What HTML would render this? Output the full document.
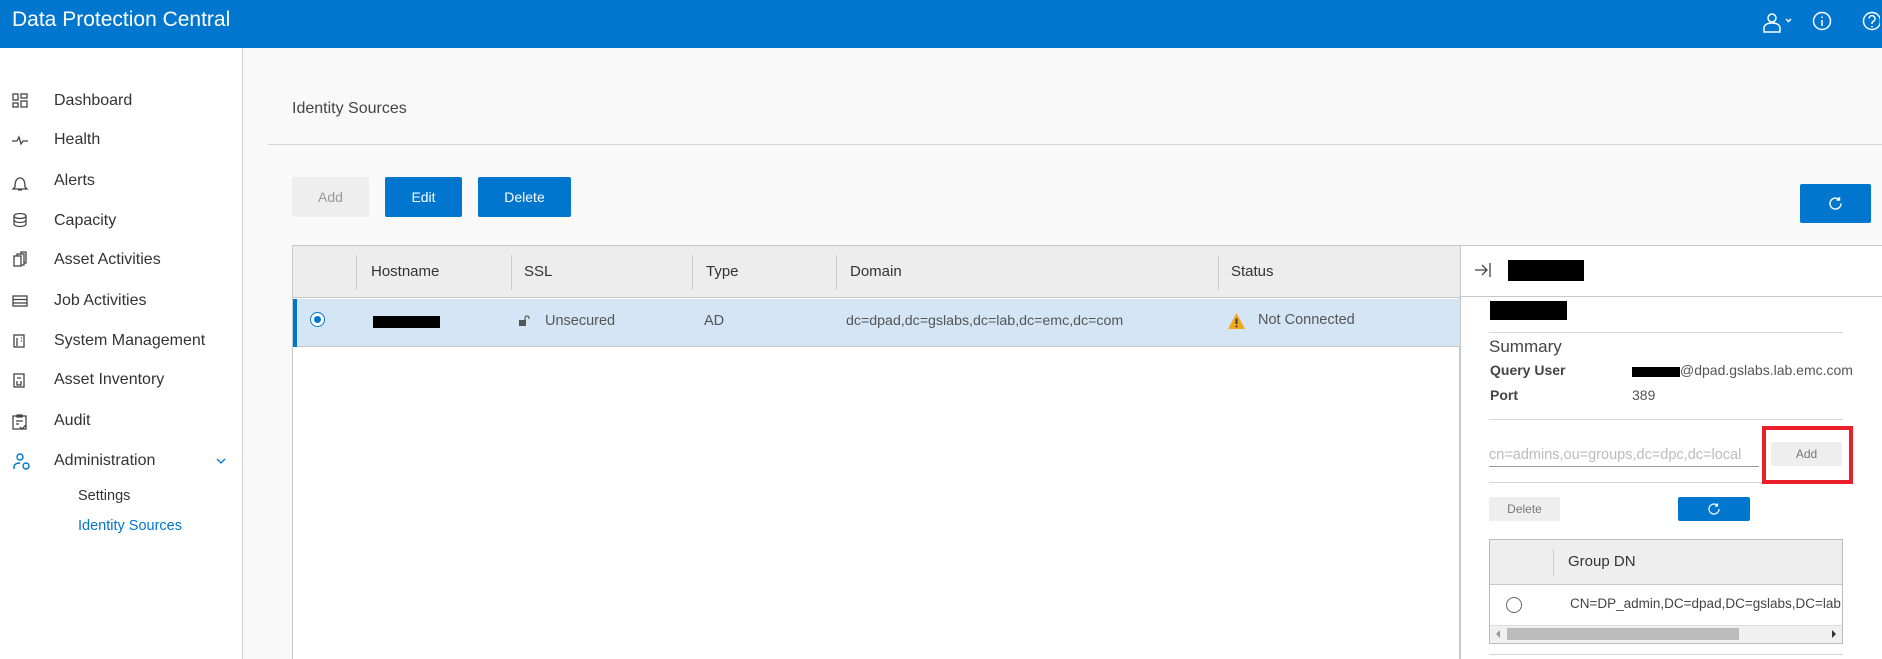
<!DOCTYPE html>
<html><head><meta charset="utf-8"><style>
*{box-sizing:border-box;margin:0;padding:0}
body{width:1882px;height:659px;overflow:hidden;font-family:"Liberation Sans",sans-serif;background:#fff;position:relative;color:#333}
.a{position:absolute}
.hdr{left:0;top:0;width:1882px;height:48px;background:#0076ce}
.side{left:0;top:48px;width:243px;height:611px;background:#fff;border-right:1px solid #d0d0d0}
.main{left:243px;top:48px;width:1639px;height:611px;background:#f9f9f9}
.nav{font-size:16px;color:#333;left:54px}
.btn{font-size:14px;text-align:center;border-radius:2px}
.th{font-size:15px;color:#333;top:263px}
.sep{width:1px;background:#ccc}
</style></head><body>
<div class="a hdr"></div>
<div class="a" style="left:12px;top:8px;font-size:21px;color:#fff">Data Protection Central</div>
<svg class="a" style="left:1760px;top:11px" width="120" height="28" viewBox="0 0 120 28" fill="none" stroke="#fff" stroke-width="1.5">
<circle cx="12" cy="7" r="4"/><path d="M4 21v-4c0-3 3-5 8-5s8 2 8 5v4z"/>
<path d="M26 8l2.5 2.5 2.5-2.5"/>
<circle cx="62" cy="10" r="8.5"/><path d="M62 9v6M62 5.5v1.5"/>
<circle cx="112" cy="10" r="8.5"/><path d="M109 7.5a3 3 0 1 1 4 3c-1 .5-1 1.2-1 2.5M112 15v1.5"/>
</svg>
<div class="a side"></div>
<svg class="a" style="left:10px;top:90px" width="22" height="390" viewBox="0 0 22 390" fill="none" stroke="#444" stroke-width="1.3">
<rect x="3" y="4" width="5" height="6"/><rect x="11" y="4" width="6" height="4"/><rect x="3" y="13" width="5" height="4"/><rect x="11" y="11" width="6" height="6"/>
<path d="M2 51h5l2-4 2 7 2-3h5"/>
<path d="M5 97c0-7 2-9 5-9s5 2 5 9l2 2H3zM8 100h4"/>
<ellipse cx="10" cy="126" rx="6" ry="2.5"/><path d="M4 126v8c0 1.5 3 2.5 6 2.5s6-1 6-2.5v-8M4 130c0 1.5 3 2.5 6 2.5s6-1 6-2.5"/>
<rect x="4" y="166" width="7" height="10"/><path d="M7 166v-2h7v11h-3M11 164v-2h5v11h-2"/>
<rect x="3" y="206" width="14" height="10"/><path d="M3 209.5h14M3 213h14"/>
<rect x="4" y="245" width="10" height="12"/><path d="M7 248v8M11 248h1M11 251h1"/>
<rect x="4" y="284" width="10" height="13"/><path d="M7 288h4M7 291v4h4v-4"/>
<rect x="3" y="326" width="13" height="13"/><path d="M7 325h5v2H7zM6 331h7M6 334h3M10 337l2 2 4-4"/>
</svg>
<div class="a nav" style="top:92px">Dashboard</div>
<div class="a nav" style="top:131px">Health</div>
<div class="a nav" style="top:172px">Alerts</div>
<div class="a nav" style="top:212px">Capacity</div>
<div class="a nav" style="top:251px">Asset Activities</div>
<div class="a nav" style="top:292px">Job Activities</div>
<div class="a nav" style="top:332px">System Management</div>
<div class="a nav" style="top:371px">Asset Inventory</div>
<div class="a nav" style="top:412px">Audit</div>
<svg class="a" style="left:12px;top:452px" width="20" height="20" viewBox="0 0 20 20" fill="none" stroke="#0076ce" stroke-width="1.4"><circle cx="8" cy="5" r="3"/><path d="M2 17v-2c0-3 3-4 6-4"/><circle cx="14" cy="14" r="3"/></svg>
<div class="a nav" style="top:452px">Administration</div>
<svg class="a" style="left:215px;top:456px" width="12" height="10" viewBox="0 0 12 10" fill="none" stroke="#0076ce" stroke-width="1.3"><path d="M2 3l4 4 4-4"/></svg>
<div class="a" style="left:78px;top:488px;font-size:14.5px;color:#333">Settings</div>
<div class="a" style="left:78px;top:518px;font-size:14.5px;color:#0076ce">Identity Sources</div>

<div class="a main"></div>
<div class="a" style="left:292px;top:100px;font-size:16px;color:#444">Identity Sources</div>
<div class="a" style="left:268px;top:144px;width:1614px;height:1px;background:#d6d6d6"></div>
<div class="a btn" style="left:292px;top:177px;width:77px;height:40px;line-height:40px;background:#eee;color:#999">Add</div>
<div class="a btn" style="left:385px;top:177px;width:77px;height:40px;line-height:40px;background:#0076ce;color:#fff">Edit</div>
<div class="a btn" style="left:478px;top:177px;width:93px;height:40px;line-height:40px;background:#0076ce;color:#fff">Delete</div>
<div class="a btn" style="left:1800px;top:184px;width:71px;height:39px;background:#0076ce"></div>
<svg class="a" style="left:1827px;top:195px" width="17" height="17" viewBox="0 0 17 17" fill="none" stroke="#fff" stroke-width="1.4"><path d="M14 8.5a5.5 5.5 0 1 1-2-4.2M12.5 2v3h-3"/></svg>

<div class="a" style="left:292px;top:245px;width:1168px;height:414px;background:#fff;border:1px solid #c8c8c8;border-bottom:none"></div>
<div class="a" style="left:293px;top:246px;width:1167px;height:52px;background:#ededed;border-bottom:1px solid #c8c8c8"></div>
<div class="a sep" style="left:356px;top:255px;height:35px"></div>
<div class="a sep" style="left:511px;top:255px;height:35px"></div>
<div class="a sep" style="left:692px;top:255px;height:35px"></div>
<div class="a sep" style="left:836px;top:255px;height:35px"></div>
<div class="a sep" style="left:1218px;top:255px;height:35px"></div>
<div class="a th" style="left:371px">Hostname</div>
<div class="a th" style="left:524px">SSL</div>
<div class="a th" style="left:706px">Type</div>
<div class="a th" style="left:850px">Domain</div>
<div class="a th" style="left:1231px">Status</div>
<div class="a" style="left:293px;top:299px;width:1167px;height:48px;background:#d4e6f6;border-bottom:1px solid #c8c8c8"></div>
<div class="a" style="left:293px;top:299px;width:4px;height:48px;background:#0076ce"></div>
<div class="a" style="left:310px;top:312px;width:15px;height:15px;border-radius:50%;border:1.5px solid #0076ce;background:#fff"></div>
<div class="a" style="left:314px;top:316px;width:7px;height:7px;border-radius:50%;background:#0076ce"></div>
<div class="a" style="left:373px;top:316px;width:67px;height:12px;background:#000"></div>
<svg class="a" style="left:518px;top:314px" width="14" height="14" viewBox="0 0 14 14"><rect x="1" y="6" width="7" height="6" fill="#555"/><path d="M7 6V4a2 2 0 0 1 4 0v1" fill="none" stroke="#555" stroke-width="1.2"/></svg>
<div class="a" style="left:545px;top:313px;font-size:14.5px;color:#555">Unsecured</div>
<div class="a" style="left:704px;top:313px;font-size:14.5px;color:#555">AD</div>
<div class="a" style="left:846px;top:313px;font-size:14.2px;color:#555">dc=dpad,dc=gslabs,dc=lab,dc=emc,dc=com</div>
<svg class="a" style="left:1227px;top:312px" width="19" height="18" viewBox="0 0 19 18"><path d="M9.5 1L18 17H1z" fill="#f0a81e"/><path d="M9.5 6.5v5.5M9.5 13.5v1.8" stroke="#333" stroke-width="1.8"/></svg>
<div class="a" style="left:1258px;top:312px;font-size:14.5px;color:#555">Not Connected</div>

<div class="a" style="left:1460px;top:245px;width:422px;height:414px;background:#fff;border-left:1px solid #c8c8c8;border-top:1px solid #c8c8c8"></div>
<div class="a" style="left:1461px;top:296px;width:421px;height:1px;background:#c8c8c8"></div>
<svg class="a" style="left:1474px;top:262px" width="18" height="16" viewBox="0 0 18 16" fill="none" stroke="#444" stroke-width="1.3"><path d="M1 8h12M8 3l5 5-5 5M16 1v14"/></svg>
<div class="a" style="left:1508px;top:260px;width:76px;height:21px;background:#000"></div>
<div class="a" style="left:1490px;top:301px;width:77px;height:19px;background:#000"></div>
<div class="a" style="left:1489px;top:332px;width:354px;height:1px;background:#d6d6d6"></div>
<div class="a" style="left:1489px;top:337px;font-size:17px;color:#444">Summary</div>
<div class="a" style="left:1490px;top:362px;font-size:14px;font-weight:bold;color:#444">Query User</div>
<div class="a" style="left:1490px;top:387px;font-size:14px;font-weight:bold;color:#444">Port</div>
<div class="a" style="left:1632px;top:367px;width:48px;height:10px;background:#000"></div>
<div class="a" style="left:1680px;top:362px;font-size:14px;color:#555">@dpad.gslabs.lab.emc.com</div>
<div class="a" style="left:1632px;top:387px;font-size:14px;color:#555">389</div>
<div class="a" style="left:1489px;top:419px;width:354px;height:1px;background:#d6d6d6"></div>
<div class="a" style="left:1489px;top:447px;font-size:14.5px;color:#bbb">cn=admins,ou=groups,dc=dpc,dc=local</div>
<div class="a" style="left:1489px;top:466px;width:270px;height:1px;background:#999"></div>
<div class="a btn" style="left:1771px;top:442px;width:71px;height:24px;line-height:24px;font-size:12px;background:#eee;color:#777">Add</div>
<div class="a" style="left:1762px;top:426px;width:91px;height:58px;border:4px solid #e8202a"></div>
<div class="a" style="left:1489px;top:482px;width:273px;height:1px;background:#d6d6d6"></div>
<div class="a btn" style="left:1489px;top:497px;width:71px;height:24px;line-height:24px;font-size:12px;background:#eee;color:#777">Delete</div>
<div class="a btn" style="left:1678px;top:497px;width:72px;height:24px;background:#0076ce"></div>
<svg class="a" style="left:1707px;top:502px" width="14" height="14" viewBox="0 0 14 14" fill="none" stroke="#fff" stroke-width="1.2"><path d="M12 7a5 5 0 1 1-2-4M10.5 1.5v2.5H8"/></svg>
<div class="a" style="left:1489px;top:539px;width:354px;height:105px;border:1px solid #bbb;background:#fff"></div>
<div class="a" style="left:1490px;top:540px;width:352px;height:45px;background:#eee;border-bottom:1px solid #c8c8c8"></div>
<div class="a sep" style="left:1553px;top:549px;height:27px"></div>
<div class="a" style="left:1568px;top:553px;font-size:15px;color:#333">Group DN</div>
<div class="a" style="left:1506px;top:597px;width:16px;height:16px;border-radius:50%;border:1.3px solid #666"></div>
<div class="a" style="left:1570px;top:596px;font-size:13.5px;color:#444;width:272px;overflow:hidden;white-space:nowrap">CN=DP_admin,DC=dpad,DC=gslabs,DC=lab,DC</div>
<div class="a" style="left:1490px;top:625px;width:352px;height:18px;background:#f0f0f0;border-top:1px solid #ddd"></div>
<div class="a" style="left:1507px;top:628px;width:232px;height:12px;background:#bcbcbc"></div>
<div class="a" style="left:1496px;top:630px;width:0;height:0;border-top:4px solid transparent;border-bottom:4px solid transparent;border-right:4px solid #999"></div>
<div class="a" style="left:1832px;top:630px;width:0;height:0;border-top:4px solid transparent;border-bottom:4px solid transparent;border-left:4px solid #333"></div>
<div class="a" style="left:1489px;top:654px;width:354px;height:1px;background:#d6d6d6"></div>
</body></html>
